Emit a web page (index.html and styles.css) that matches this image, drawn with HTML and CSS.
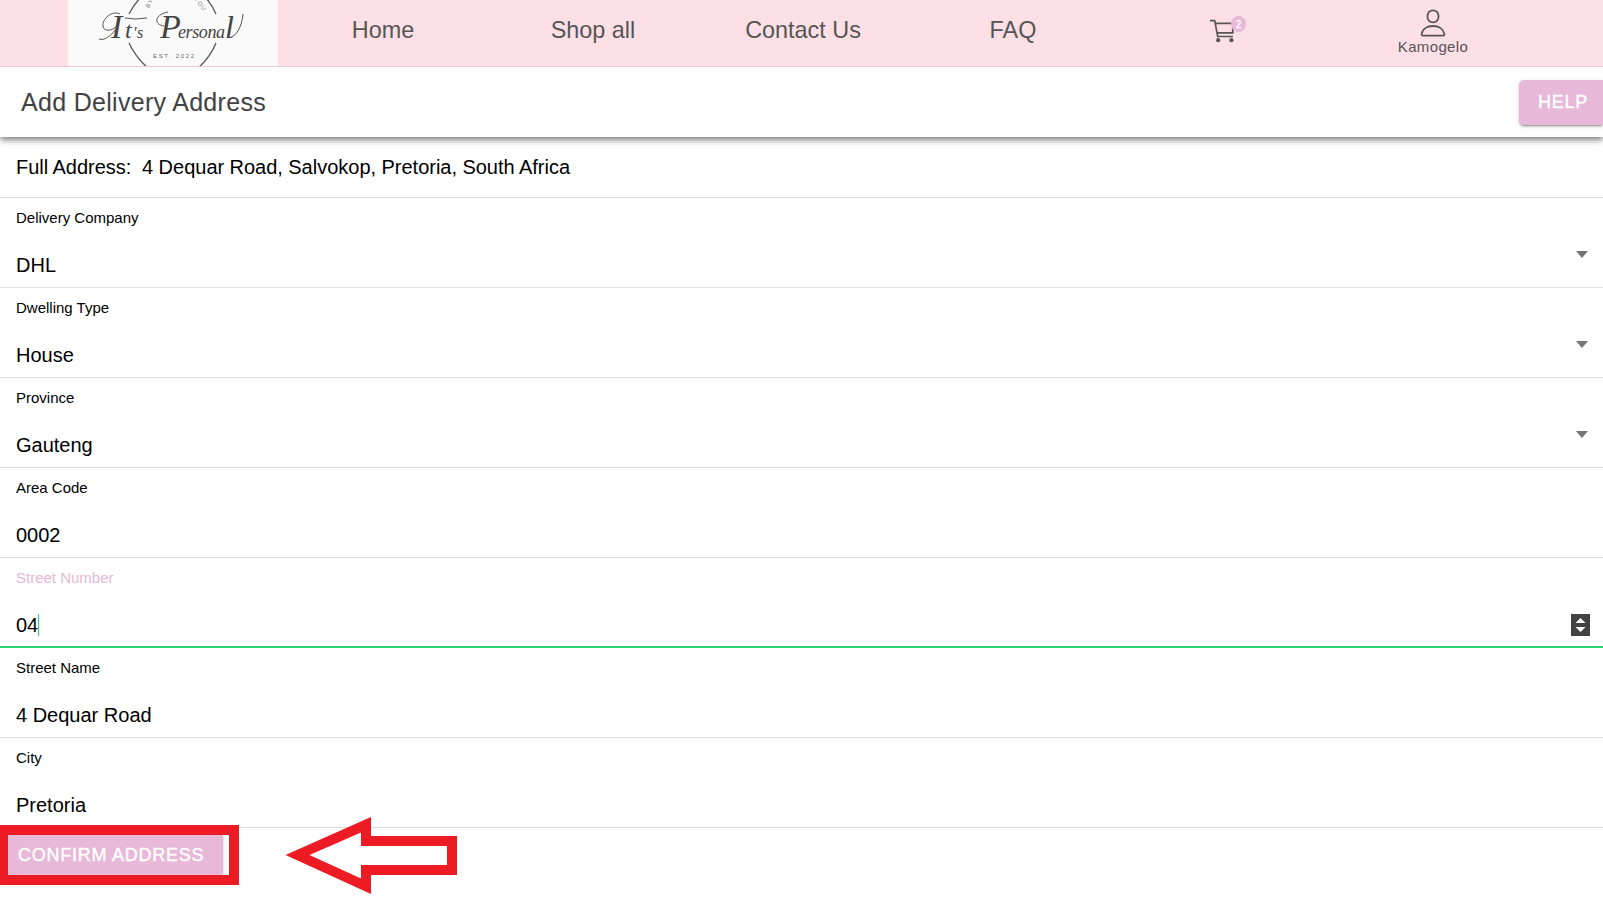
FILE: index.html
```html
<!DOCTYPE html>
<html lang="en">
<head>
<meta charset="utf-8">
<title>Add Delivery Address</title>
<link rel="stylesheet" href="styles.css">
</head>
<body>
<header class="nav">
  <svg class="logo" viewBox="0 0 210 66" role="img" aria-label="It's Personal">
    <g fill="none" stroke="#555" stroke-width="1.3">
      <path d="M61 14C66 4 72-3 80-9M148 14C144 5 139-2 132-8M61 43C66 54 72 61 80 68M148 43C144 53 138 61 130 68"/>
      <path stroke="#444" stroke-width=".9" d="M52 14C44 10 34 19 35 26C36 32 43 31 48 27M31 39C36 41 43 36 47 30M57 18Q67 20 79 18M96 26C84 24 88 14 100 12M163 37C168 36 174 27 175 14"/>
    </g>
    <text class="script" x="43" y="38">I<tspan x="57" font-size="24">t</tspan><tspan x="65" font-size="16">'</tspan><tspan x="69" font-size="16">s</tspan></text>
    <text class="script" x="92" y="38">P<tspan x="110" font-size="18" textLength="47">ersona</tspan><tspan x="157" font-size="32">l</tspan></text>
    <text class="tiny" transform="translate(81 8.500) rotate(-62)">BY</text>
    <text class="tiny" transform="translate(126 -1) rotate(52)">YOU</text>
    <text class="est" x="85" y="57.5" textLength="41">EST. 2022</text>
  </svg>
  <a class="link">Home</a>
  <a class="link">Shop all</a>
  <a class="link">Contact Us</a>
  <a class="link">FAQ</a>
  <div class="cart">
    <svg width="38" height="26" viewBox="0 0 38 26">
      <g fill="none" stroke="#565655" stroke-width="1.7">
        <path d="M0 5.600H4.700L7.700 21.500H23M5.300 8.400H22.800V17.900H7"/>
      </g>
      <circle cx="8.200" cy="25.200" r="2.100" fill="#565655"/><circle cx="21.400" cy="25.200" r="2.100" fill="#565655"/>
    </svg>
    <span class="badge">2</span>
  </div>
  <div class="user">
    <svg width="26" height="28" viewBox="0 0 26 28" fill="none" stroke="#565655" stroke-width="1.8">
      <rect x="7.5" y="1.4" width="11" height="12" rx="5.3"/>
      <path d="M2.7 26.6Q1.5 26.6 1.7 25C2.4 20 7 17 13 17S23.600 20 24.300 25Q24.500 26.600 23.300 26.600Z"/>
    </svg>
    <span>Kamogelo</span>
  </div>
</header>
<div class="toolbar">
  <h1>Add Delivery Address</h1>
  <button class="btn help">HELP</button>
</div>
<main>
  <div class="full">Full Address:&nbsp; 4 Dequar Road, Salvokop, Pretoria, South Africa</div>
  <div class="field"><label>Delivery Company</label><p>DHL</p><i class="caret"></i></div>
  <div class="field"><label>Dwelling Type</label><p>House</p><i class="caret"></i></div>
  <div class="field"><label>Province</label><p>Gauteng</p><i class="caret"></i></div>
  <div class="field"><label>Area Code</label><p>0002</p></div>
  <div class="field active"><label>Street Number</label><p>04<span class="cursor"></span></p>
    <svg class="spin" width="19" height="22" viewBox="0 0 19 22"><path fill="#424242" d="M0 0h19v22H0z"/><path fill="#fff" d="M9.500 4L14.500 9H4.500zM4.500 13H14.500L9.500 18z"/></svg>
  </div>
  <div class="field"><label>Street Name</label><p>4 Dequar Road</p></div>
  <div class="field"><label>City</label><p>Pretoria</p></div>
  <div class="actions">
    <button class="btn confirm">CONFIRM ADDRESS</button>
    <div class="highlight"></div>
    <svg class="arrow" width="180" height="84" viewBox="280 812 180 84"><path fill="#ed1c24" fill-rule="evenodd" d="M285.500 855L371 817V836H457V875H371V894ZM309.500 855L361 878.500V865H447V846H361V832.500Z"/></svg>
  </div>
</main>
</body>
</html>
```
FILE: styles.css
```css
* { box-sizing: border-box; }
body { margin: 0; height: 905px; overflow: hidden; background: #fff; color: #000; font-family: "Liberation Sans", Arial, sans-serif; }
.nav { position: relative; z-index: 1; display: grid; grid-template-columns: repeat(7, 210px); height: 67px; padding-left: 68px; background: #fddfe6; border-bottom: 1px solid #efcbd7; color: #565655; }
.logo { width: 210px; height: 66px; background: #fafafa; overflow: hidden; }
.script { font: italic 34px "Liberation Serif", serif; fill: #444; }
.tiny { font: 6px "Liberation Sans", sans-serif; fill: #777; letter-spacing: 1px; }
.est { font: 6px "Liberation Sans", sans-serif; fill: #666; }
.link { font-size: 23.4px; line-height: 60px; text-align: center; }
.cart { position: relative; padding: 15px 0 0 92px; }
.cart svg { display: block; overflow: visible; }
.badge { position: absolute; left: 113px; top: 16px; width: 15px; height: 16px; border-radius: 50%; background: #e7b8d7; color: #fff; font-size: 10px; line-height: 17px; text-align: center; -webkit-text-stroke: .3px #fff; }
.user { display: flex; flex-direction: column; align-items: center; padding-top: 9px; font-size: 15px; line-height: 20px; letter-spacing: .35px; }
.user svg { display: block; }
.toolbar { position: relative; display: flex; justify-content: space-between; height: 70px; padding: 13px 0 0 21px; background: #fff; box-shadow: 0 2px 4px -1px rgba(0,0,0,.2), 0 4px 5px rgba(0,0,0,.14), 0 1px 10px rgba(0,0,0,.12), 0 2px 8px rgba(0,0,0,.25); }
h1 { margin: 0; font-size: 25px; font-weight: 400; line-height: 44px; letter-spacing: .3px; color: #424242; }
.btn { display: block; border: 0; padding: 0; background: #e7b8d7; color: #fff; font: 500 18px "Liberation Sans", Arial, sans-serif; letter-spacing: .75px; text-align: left; -webkit-text-stroke: .4px #fff; box-shadow: 0 3px 1px -2px rgba(0,0,0,.2), 0 2px 2px rgba(0,0,0,.14), 0 1px 5px rgba(0,0,0,.12); }
.help { width: 84px; height: 45px; padding-left: 19px; border-radius: 5px 0 0 5px; }
.full { height: 61px; padding: 18px 16px 0; border-bottom: 1px solid #dedede; font-size: 20px; line-height: 24px; word-spacing: -.2px; }
.field { position: relative; height: 90px; padding: 10px 16px 0; border-bottom: 1px solid #dedede; }
label { display: block; font-size: 15px; line-height: 20px; }
p { display: flex; align-items: center; margin: 24px 0 0; font-size: 20px; line-height: 26px; }
.caret { position: absolute; right: 15px; top: 53px; border: 6px solid transparent; border-top: 7px solid #757575; border-bottom: 0; }
.active { border-bottom: 2px solid #2dd36f; }
.active label { color: #e7b8d7; }
.cursor { width: 1px; height: 22px; background: #2dd36f; }
.spin { position: absolute; right: 13px; top: 56px; }
.actions { position: relative; height: 77px; padding: 7px 0 0 5px; }
.confirm { width: 218px; height: 45px; padding: 0 0 4px 13px; }
.highlight { position: absolute; left: 0; top: -3px; width: 239px; height: 60px; border: 10px solid #ed1c24; border-width: 10px 10px 10px 8px; }
.arrow { position: absolute; left: 280px; top: -16px; }
```
